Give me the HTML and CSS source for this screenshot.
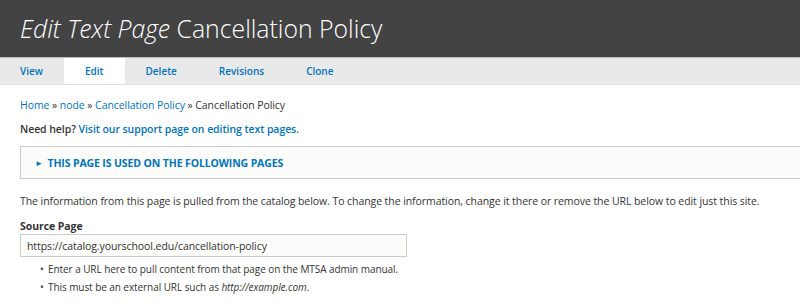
FILE: index.html
```html
<!DOCTYPE html>
<html lang="en">
<head>
  <meta charset="UTF-8">
  <title>Edit Text Page Cancellation Policy</title>
  <link rel="stylesheet" href="styles.css">
</head>
<body>
  <header class="page-header">
    <h1><em>Edit Text Page</em> Cancellation Policy</h1>
  </header>

  <nav class="tabs">
    <a href="#">View</a>
    <a href="#" class="active">Edit</a>
    <a href="#">Delete</a>
    <a href="#">Revisions</a>
    <a href="#">Clone</a>
  </nav>

  <div class="content">
    <div class="breadcrumb">
      <a href="#">Home</a> » <a href="#">node</a> » <a href="#">Cancellation Policy</a> » Cancellation Policy
    </div>

    <p class="help">Need help? <a href="#">Visit our support page on editing text pages.</a></p>

    <div class="details">
      <span class="arrow">►</span> This page is used on the following pages
    </div>

    <p class="info">The information from this page is pulled from the catalog below. To change the information, change it there or remove the URL below to edit just this site.</p>

    <label class="label" for="source">Source Page</label>
    <input type="text" id="source" class="field" value="https://catalog.yourschool.edu/cancellation-policy">
    <ul class="hints">
      <li>Enter a URL here to pull content from that page on the MTSA admin manual.</li>
      <li>This must be an external URL such as <em>http://example.com</em>.</li>
    </ul>
  </div>
</body>
</html>
```

FILE: styles.css
```css
/* Base */
body {
  margin: 0;
  background-color: #FFFFFF;
  color: #333333;
  font-family: 'Open Sans', sans-serif;
  font-size: 10.5px;
  letter-spacing: -0.07px;
}
a {
  color: #0074BD;
  text-decoration: none;
}

/* Header */
.page-header {
  background-color: #434343;
  height: 58px;
  border-bottom: 1px solid #BDBDBD;
  padding: 0 20px;
  box-sizing: border-box;
}
.page-header h1 {
  margin: 0;
  color: #FFFFFF;
  font-weight: 300;
  font-size: 24.8px;
  letter-spacing: 0;
  line-height: 57px;
}

/* Tabs */
.tabs {
  display: flex;
  background-color: #E9E9E9;
  height: 26px;
  border-bottom: 1px solid #E2E2E2;
}
.tabs a {
  padding: 0 21px;
  font-weight: 600;
  font-size: 10px;
  letter-spacing: 0;
  line-height: 26px;
}
.tabs a:first-child {
  padding-left: 20px;
}
.tabs a.active {
  background-color: #FFFFFF;
}

/* Content */
.content {
  padding: 10px 0 0 20px;
}
.breadcrumb {
  line-height: 20px;
}
.help {
  margin: 4px 0 0;
  font-weight: 600;
  line-height: 20px;
}
.details {
  margin-top: 7px;
  height: 33px;
  box-sizing: border-box;
  border: 1px solid #CCCCCC;
  border-right: none;
  background-color: #FCFCFA;
  padding: 0 0 0 14px;
  line-height: 31px;
  color: #0074BD;
  font-weight: 700;
  letter-spacing: -0.12px;
  text-transform: uppercase;
}
.details .arrow {
  font-size: 8px;
  margin-right: 2px;
  vertical-align: 1px;
}
.info {
  margin: 12px 0 0;
  line-height: 20px;
}
.label {
  display: block;
  margin-top: 7px;
  font-weight: 700;
  line-height: 16px;
}
.field {
  display: block;
  margin-top: 0;
  width: 387px;
  height: 23px;
  box-sizing: border-box;
  border: 1px solid #CCCCCC;
  background-color: #FCFCFA;
  padding: 0 6px;
  font-family: 'Open Sans', sans-serif;
  font-size: 10.5px;
  letter-spacing: -0.07px;
  color: #333333;
}
.hints {
  list-style: none;
  margin: 3px 0 0;
  padding-left: 20px;
  font-size: 10px;
}
.hints li {
  line-height: 18px;
}
.hints li::before {
  content: "•";
  display: inline-block;
  width: 8px;
  font-size: 10px;
}
```
